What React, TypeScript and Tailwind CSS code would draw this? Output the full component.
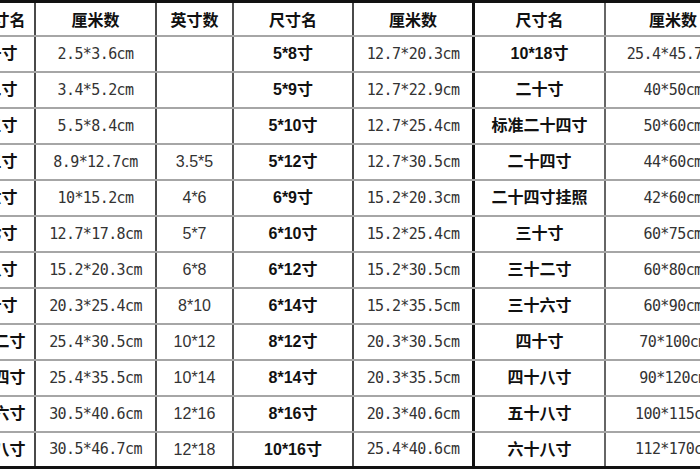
const rows: string[][] = [
  ["一寸", "2.5*3.6cm", "", "5*8寸", "12.7*20.3cm", "10*18寸", "25.4*45.7cm"],
  ["二寸", "3.4*5.2cm", "", "5*9寸", "12.7*22.9cm", "二十寸", "40*50cm"],
  ["三寸", "5.5*8.4cm", "", "5*10寸", "12.7*25.4cm", "标准二十四寸", "50*60cm"],
  ["五寸", "8.9*12.7cm", "3.5*5", "5*12寸", "12.7*30.5cm", "二十四寸", "44*60cm"],
  ["六寸", "10*15.2cm", "4*6", "6*9寸", "15.2*20.3cm", "二十四寸挂照", "42*60cm"],
  ["七寸", "12.7*17.8cm", "5*7", "6*10寸", "15.2*25.4cm", "三十寸", "60*75cm"],
  ["八寸", "15.2*20.3cm", "6*8", "6*12寸", "15.2*30.5cm", "三十二寸", "60*80cm"],
  ["十寸", "20.3*25.4cm", "8*10", "6*14寸", "15.2*35.5cm", "三十六寸", "60*90cm"],
  ["十二寸", "25.4*30.5cm", "10*12", "8*12寸", "20.3*30.5cm", "四十寸", "70*100cm"],
  ["十四寸", "25.4*35.5cm", "10*14", "8*14寸", "20.3*35.5cm", "四十八寸", "90*120cm"],
  ["十六寸", "30.5*40.6cm", "12*16", "8*16寸", "20.3*40.6cm", "五十八寸", "100*115cm"],
  ["十八寸", "30.5*46.7cm", "12*18", "10*16寸", "25.4*40.6cm", "六十八寸", "112*170cm"],
];

const headers = ["尺寸名", "厘米数", "英寸数", "尺寸名", "厘米数", "尺寸名", "厘米数"];

// column widths, right border of each cell is the grid line
const cols = [
  "w-[67px] border-r-2 border-[#4a4a4a]",
  "w-[121px] border-r-2 border-[#4a4a4a]",
  "w-[77px] border-r-2 border-[#555]",
  "w-[120px] border-r-2 border-[#4a4a4a]",
  "w-[121px] border-r-[3px] border-[#111]",
  "w-[131px] border-r-2 border-[#666]",
  "w-[134px]",
];

const nameFont = "font-['Liberation_Sans','Noto_Sans_CJK_SC',sans-serif] text-[16px] font-bold text-[#111]";
const cmFont = "font-['DejaVu_Sans_Mono',monospace] text-[15px] tracking-[-0.6px] text-[#333]";
const inchFont = "font-['Liberation_Sans',sans-serif] text-[16px] text-[#333]";

function cellFont(i: number) {
  if (i === 0 || i === 3 || i === 5) return nameFont;
  if (i === 2) return inchFont;
  return cmFont;
}

export default function App() {
  return (
    <div className="h-[470px] w-[700px] overflow-hidden bg-white">
      <div className="ml-[-31px] w-[791px] border-t-[3px] border-[#111]">
        <div className="flex h-[34px] border-b-2 border-[#a6a6a6]">
          {headers.map((h, i) => (
            <div
              key={i}
              className={`${cols[i]} flex shrink-0 items-center justify-center font-['Noto_Sans_CJK_SC',sans-serif] text-[16px] font-bold text-[#111]`}
            >
              {h}
            </div>
          ))}
        </div>
        {rows.map((row, r) => (
          <div
            key={r}
            className={
              r === rows.length - 1
                ? "flex h-[36px] border-b-[3px] border-[#111]"
                : "flex h-[36px] border-b-2 border-[#a6a6a6]"
            }
          >
            {row.map((c, i) => (
              <div
                key={i}
                className={`${cols[i]} ${cellFont(i)} flex shrink-0 items-center justify-center whitespace-nowrap`}
              >
                {c}
              </div>
            ))}
          </div>
        ))}
      </div>
    </div>
  );
}
